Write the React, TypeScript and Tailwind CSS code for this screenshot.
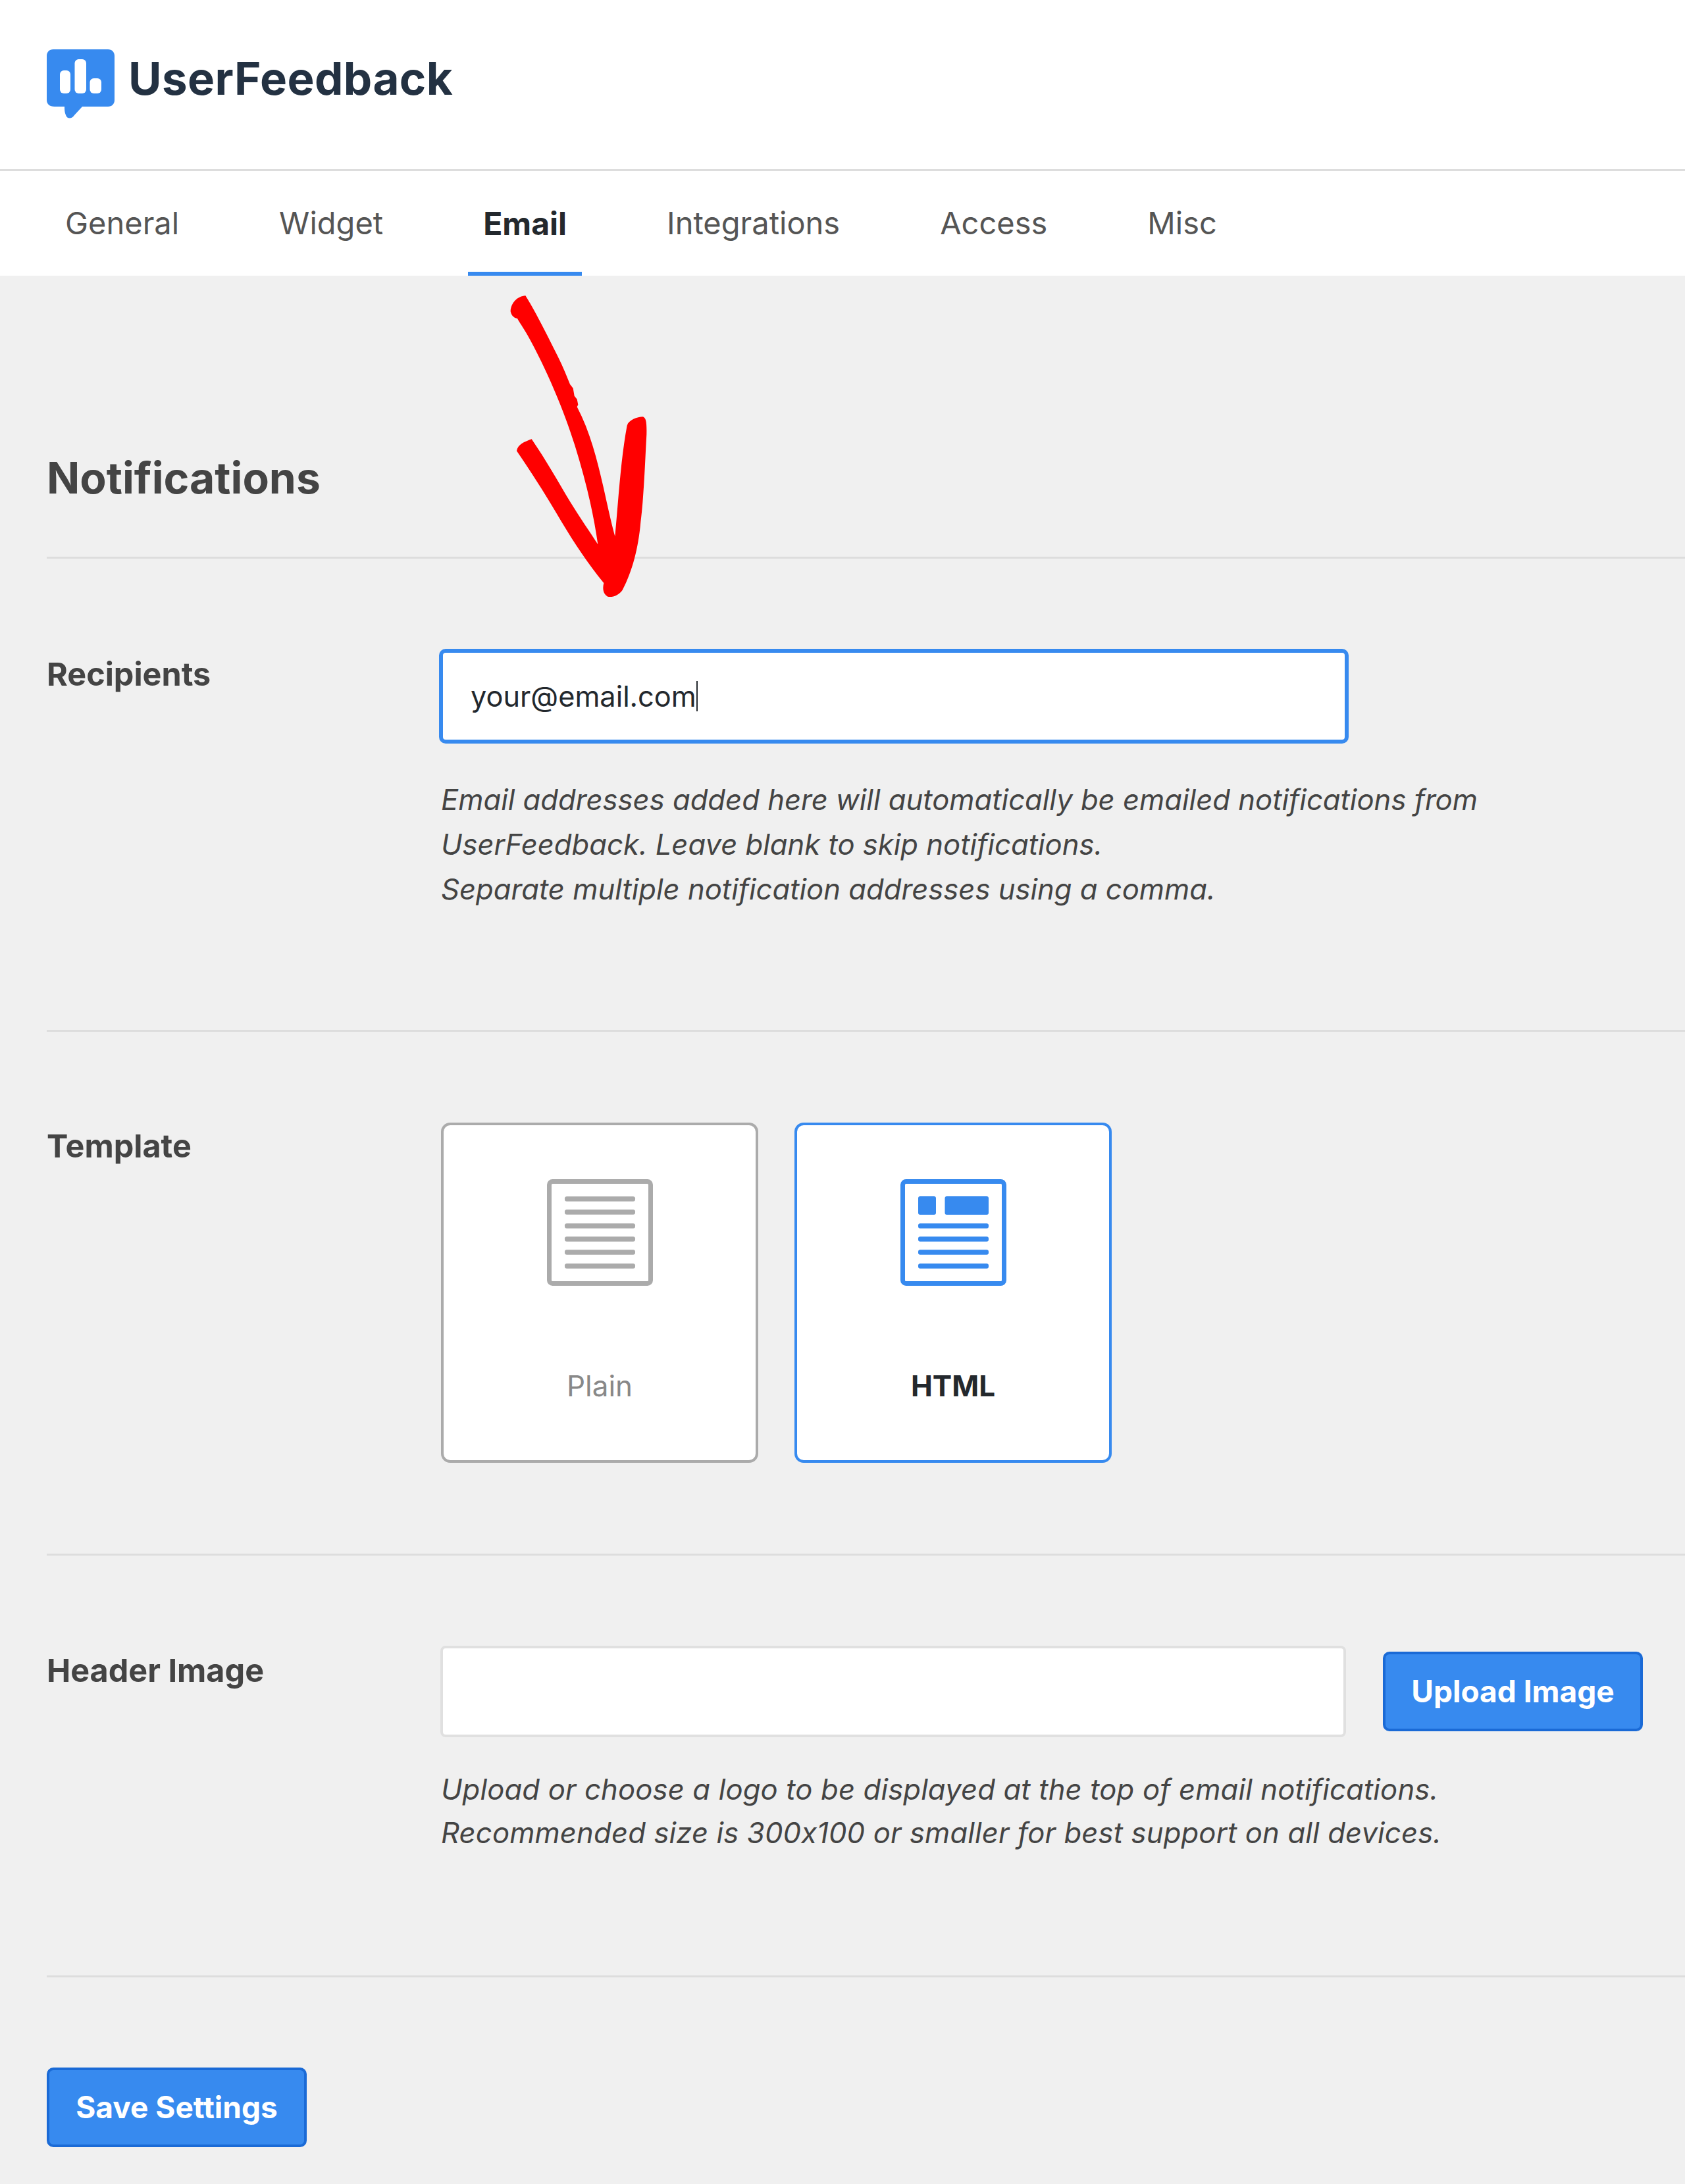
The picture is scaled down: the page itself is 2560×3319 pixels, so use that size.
const tabs = ["General", "Widget", "Email", "Integrations", "Access", "Misc"];

function Logo() {
  return (
    <svg width="103" height="105" viewBox="0 0 103 105" className="shrink-0">
      <path
        d="M10 0H93C99 0 103 4 103 10V77C103 83 99 87 93 87H54L42 100C38 106 31 106 29 100C27 96 27 91 27 87H12C4 87 0 83 0 77V10C0 4 4 0 10 0Z"
        fill="#378AEF"
      />
      <rect x="20" y="32" width="16" height="35" rx="6" fill="#fff" />
      <rect x="42.5" y="15" width="17.5" height="52" rx="6" fill="#fff" />
      <rect x="65.5" y="44" width="17.5" height="23" rx="6" fill="#fff" />
    </svg>
  );
}

function PlainIcon() {
  return (
    <svg width="161" height="162" viewBox="0 0 161 162">
      <rect x="3.5" y="3.5" width="154" height="155" rx="5" fill="none" stroke="#ABABAB" strokeWidth="7" />
      {[30, 50, 71, 91, 111, 132].map((y) => (
        <rect key={y} x="27" y={y - 3.75} width="107" height="7.5" rx="3" fill="#ABABAB" />
      ))}
    </svg>
  );
}

function HtmlIcon() {
  return (
    <svg width="161" height="162" viewBox="0 0 161 162">
      <rect x="3.5" y="3.5" width="154" height="155" rx="5" fill="none" stroke="#378AEF" strokeWidth="7" />
      <rect x="27" y="26" width="27" height="28" rx="3" fill="#378AEF" />
      <rect x="67.5" y="26" width="66.5" height="28" rx="3" fill="#378AEF" />
      {[71, 91, 111, 132].map((y) => (
        <rect key={y} x="27" y={y - 3.75} width="107" height="7.5" rx="3" fill="#378AEF" />
      ))}
    </svg>
  );
}

export default function App() {
  return (
    <div className="relative w-[2560px] h-[3319px] overflow-hidden bg-[#f0f0f0] font-['Inter',sans-serif] text-[#444]">
      {/* Top bar */}
      <div className="flex items-center gap-[21px] h-[260px] pl-[71px] pb-[2px] bg-white border-b-[3px] border-[#ddd]">
        <Logo />
        <span className="text-[69px] font-bold text-[#233142] tracking-[0.4px] -mt-[15px]">UserFeedback</span>
      </div>

      {/* Tabs */}
      <nav className="flex gap-[106px] h-[159px] pl-[76px] bg-white">
        {tabs.map((tab) => (
          <div
            key={tab}
            className={
              tab === "Email"
                ? "flex items-center px-[23px] pt-[6px] text-[48px] font-bold text-[#23282d] border-b-[6px] border-[#378aef]"
                : "flex items-center px-[23px] pt-[6px] text-[47px] text-[#555] border-b-[6px] border-transparent"
            }
          >
            {tab}
          </div>
        ))}
      </nav>

      {/* Settings */}
      <div className="pl-[71px]">
        <h1 className="flex items-center h-[430px] pt-[212px] pb-[24px] text-[66px] font-bold text-[#444] border-b-[3px] border-[#ddd]">
          Notifications
        </h1>

        <section className="grid grid-cols-[600px_1fr] h-[719px] pt-[137px] border-b-[3px] border-[#ddd]">
          <div className="text-[48.5px] font-bold leading-[68px] mt-[5px]">Recipients</div>
          <div className="-ml-[1px]">
            <div className="flex items-center w-[1382px] h-[144px] -ml-[3px] pl-[42px] bg-white rounded-[10px] border-[6px] border-[#378aef] text-[43.3px] text-[#23282d]">
              your@email.com<span className="w-[2px] h-[46px] bg-[#23282d]" />
            </div>
            <p className="mt-[52px] text-[43.6px] leading-[68px] italic text-[#444] [font-feature-settings:'calt'_0]">
              Email addresses added here will automatically be emailed notifications from
              <br />
              UserFeedback. Leave blank to skip notifications.
              <br />
              Separate multiple notification addresses using a comma.
            </p>
          </div>
        </section>

        <section className="grid grid-cols-[600px_1fr] h-[796px] pt-[138px] border-b-[3px] border-[#ddd]">
          <div className="text-[48.5px] font-bold leading-[68px] mt-[2px]">Template</div>
          <div className="flex gap-[55px] -ml-[1px]">
            <div className="flex flex-col items-center w-[482px] h-[517px] pt-[82px] bg-white rounded-[14px] border-[4px] border-[#ababab]">
              <PlainIcon />
              <span className="mt-[118px] text-[44px] leading-[68px] text-[#888]">Plain</span>
            </div>
            <div className="flex flex-col items-center w-[482px] h-[517px] pt-[82px] bg-white rounded-[14px] border-[4px] border-[#378aef]">
              <HtmlIcon />
              <span className="mt-[118px] text-[44px] leading-[68px] font-bold text-[#23282d]">HTML</span>
            </div>
          </div>
        </section>

        <section className="grid grid-cols-[600px_1fr] h-[641px] pt-[137px] border-b-[3px] border-[#ddd]">
          <div className="text-[48.5px] font-bold leading-[68px] mt-[4px]">Header Image</div>
          <div className="-ml-[1px]">
            <div className="flex items-center gap-[56px] pr-[63px]">
              <div className="w-[1376px] h-[139px] -ml-[1px] bg-white rounded-[8px] border-[4px] border-[#e0e0e0]" />
              <button className="flex items-center justify-center w-[395px] h-[121px] bg-[#378aef] rounded-[10px] border-[4px] border-[#1a6ad6] text-[46px] font-bold text-white">
                Upload Image
              </button>
            </div>
            <p className="mt-[47px] text-[43.6px] tracking-[0.15px] leading-[66px] italic text-[#444] [font-feature-settings:'calt'_0]">
              Upload or choose a logo to be displayed at the top of email notifications.
              <br />
              Recommended size is 300x100 or smaller for best support on all devices.
            </p>
          </div>
        </section>

        <div className="pt-[137px]">
          <button className="flex items-center justify-center w-[395px] h-[121px] bg-[#378aef] rounded-[10px] border-[4px] border-[#1a6ad6] text-[46px] font-bold text-white">
            Save Settings
          </button>
        </div>
      </div>

      {/* Hand-drawn arrow annotation */}
      <svg width="500" height="520" viewBox="0 0 1500 1560" className="absolute left-[640px] top-[420px]">
        <path
          fill="#FF0000"
          d="M475 88C520 160 570 260 620 360C650 420 665 460 678 492L692 510L698 545L710 560L715 585L710 595C770 710 800 830 830 960C850 1050 865 1120 883 1185C900 1000 910 830 938 680C945 655 985 640 1010 640C1025 645 1028 665 1027 720C1020 850 1015 1000 1000 1120C990 1240 960 1350 917 1430C900 1455 870 1465 850 1460C830 1450 825 1425 832 1398C760 1310 700 1220 640 1120C570 1000 500 890 435 796C440 765 470 755 503 742C570 840 620 930 680 1030C720 1095 765 1160 805 1222C785 1080 750 930 700 770C650 610 570 420 480 260C465 235 445 205 438 192C420 190 410 175 407 160C408 120 440 90 475 88Z"
        />
      </svg>
    </div>
  );
}
